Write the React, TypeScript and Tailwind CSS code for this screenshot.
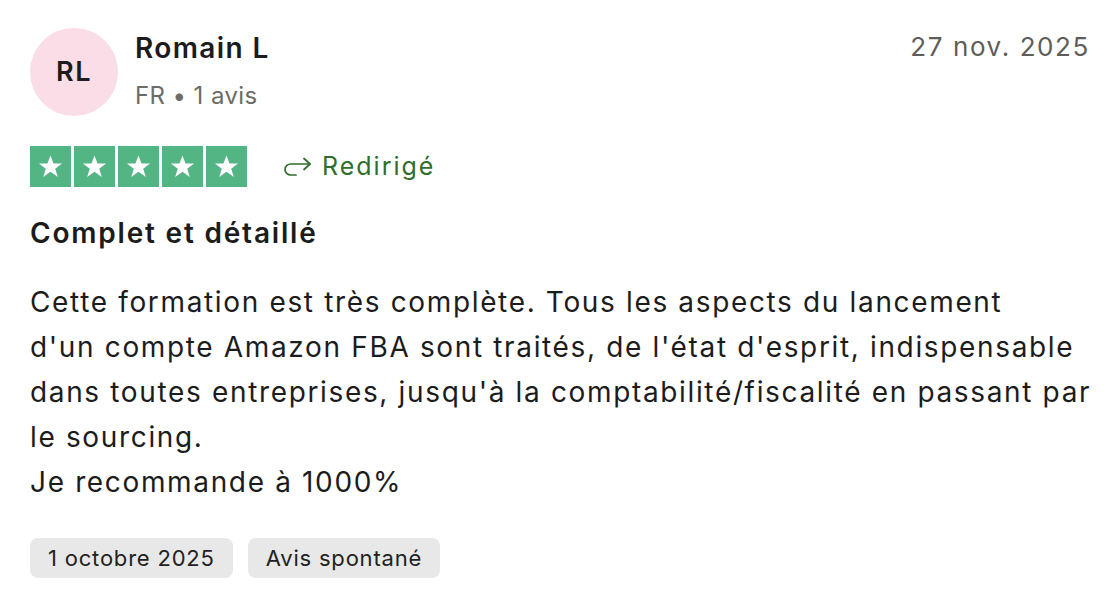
const Star = () => (
  <svg viewBox="0 0 24 24" className="w-[27px] h-[27px]" fill="#ffffff">
    <path d="M12 2.2l2.7 7.1h7.6l-6.1 4.6 2.3 7.4L12 16.7l-6.5 4.6 2.3-7.4-6.1-4.6h7.6z" />
  </svg>
);

const RedirectArrow = () => (
  <svg viewBox="0 0 30 22" className="w-[30px] h-[22px]" fill="none" stroke="#2f6e2c" strokeWidth="1.7" strokeLinecap="round" strokeLinejoin="round">
    <path d="M27 8H8C4.5 8 2 10.5 2 13.5S4.5 19 8 19H13" />
    <path d="M21 2.5l6 5.5-6 5.5" />
  </svg>
);

const Tag = ({ label }: { label: string }) => (
  <span className="h-[40px] px-[18px] rounded-[8px] bg-[#e8e8e8] text-[22px] tracking-[0.8px] text-[#222] flex items-center">
    {label}
  </span>
);

export default function App() {
  return (
    <div className="w-[1120px] h-[600px] bg-white text-[#1c1c1c] px-[30px] pt-[28px]" style={{ fontFamily: "Inter, 'Noto Sans', sans-serif" }}>
      <div className="flex items-start">
        <div className="w-[88px] h-[88px] rounded-full bg-[#fadde6] flex items-center justify-center text-[27px] tracking-[1.5px] font-semibold text-[#1c1c1c]">
          RL
        </div>
        <div className="ml-[17px] flex flex-col">
          <div className="text-[28px] font-semibold tracking-[1.4px] leading-[40px]">Romain L</div>
          <div className="text-[24px] tracking-[0.4px] text-[#6b6b68] leading-[34px] mt-[11px]">FR • 1 avis</div>
        </div>
        <div className="ml-auto text-[26px] text-[#5e5d59] leading-[36px] tracking-[1.6px] mt-[1px]">27 nov. 2025</div>
      </div>

      <div className="flex items-center mt-[30px]">
        <div className="flex gap-[3px]">
          {[0, 1, 2, 3, 4].map((i) => (
            <div key={i} className="w-[41px] h-[41px] bg-[#53b583] flex items-center justify-center">
              <Star />
            </div>
          ))}
        </div>
        <div className="ml-[36px] flex items-center gap-[9px] text-[25px] tracking-[2px] text-[#2f6e2c]">
          <RedirectArrow />
          <span>Redirigé</span>
        </div>
      </div>

      <div className="mt-[26px] text-[28px] font-semibold tracking-[1.8px] leading-[40px]">Complet et détaillé</div>

      <p className="mt-[27px] text-[28px] leading-[45px] tracking-[1.65px] whitespace-nowrap text-[#1c1c1c]">
        Cette formation est très complète. Tous les aspects du lancement
        <br />
        d'un compte Amazon FBA sont traités, de l'état d'esprit, indispensable
        <br />
        dans toutes entreprises, jusqu'à la comptabilité/fiscalité en passant par
        <br />
        le sourcing.
        <br />
        Je recommande à 1000%
      </p>

      <div className="flex gap-[15px] mt-[33px]">
        <Tag label="1 octobre 2025" />
        <Tag label="Avis spontané" />
      </div>
    </div>
  );
}
